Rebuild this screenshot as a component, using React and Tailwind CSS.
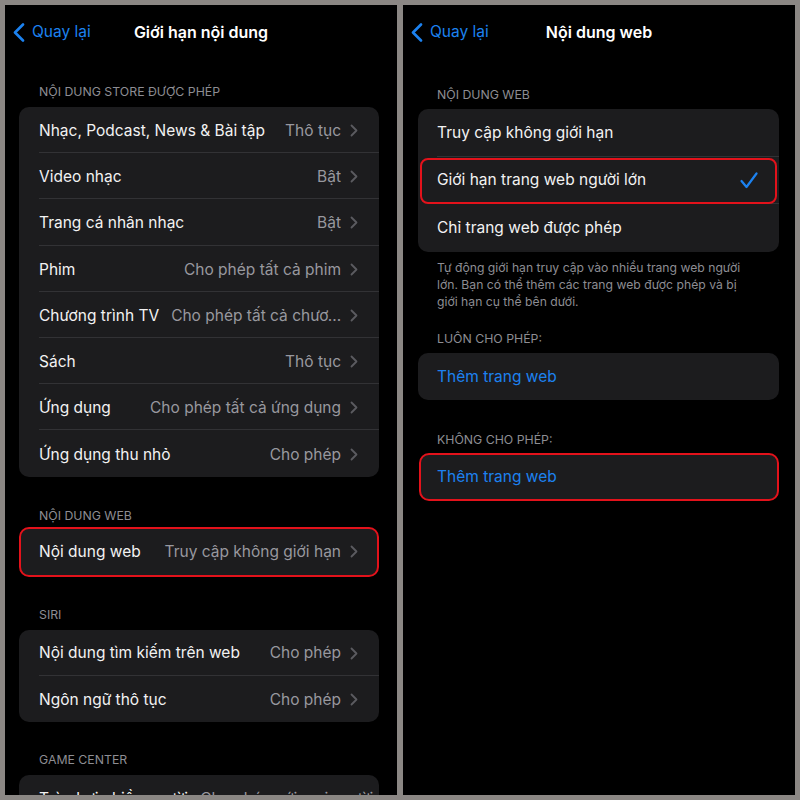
import React from 'react';

const font = { fontFamily: 'Inter, "Noto Sans", sans-serif' };

const Chevron = () => (
  <svg width="8" height="13" viewBox="0 0 8 13" className="shrink-0 ml-[9px]">
    <path d="M1.5 1.5 L6.5 6.5 L1.5 11.5" fill="none" stroke="#5b5b60" strokeWidth="1.8" strokeLinecap="round" strokeLinejoin="round" />
  </svg>
);

const BackChevron = () => (
  <svg width="12" height="19" viewBox="0 0 12 19">
    <path d="M10 1.5 L2 9.5 L10 17.5" fill="none" stroke="#1c82f0" strokeWidth="2.6" strokeLinecap="round" strokeLinejoin="round" />
  </svg>
);

const NavBar = ({ title }) => (
  <div className="h-[54px] grid grid-cols-[1fr_auto_1fr] items-center">
    <div className="flex items-center pl-[8px] gap-[7px]">
      <BackChevron />
      <span className="text-[15.5px] text-[#1c82f0]">Quay lại</span>
    </div>
    <div className="text-[16px] font-semibold text-white">{title}</div>
    <div />
  </div>
);

const Header = ({ children, className }) => (
  <div className={`text-[12.3px] leading-[16px] text-[#8d8d93] uppercase ${className}`}>{children}</div>
);

const Row = ({ label, value, last }) => (
  <div className="flex items-center h-[46.2px] pl-[20px]">
    <div className={`flex-1 flex items-center h-full pr-[21px] pt-[2px] ${last ? '' : 'border-b border-[#323235]'}`}>
      <span className="text-[15.5px] text-[#f2f2f2] whitespace-nowrap">{label}</span>
      <span className="flex-1 text-right text-[15.5px] text-[#98989e] whitespace-nowrap overflow-hidden ml-3">{value}</span>
      <Chevron />
    </div>
  </div>
);

const leftRows = [
  ['Nhạc, Podcast, News & Bài tập', 'Thô tục'],
  ['Video nhạc', 'Bật'],
  ['Trang cá nhân nhạc', 'Bật'],
  ['Phim', 'Cho phép tất cả phim'],
  ['Chương trình TV', 'Cho phép tất cả chươ...'],
  ['Sách', 'Thô tục'],
  ['Ứng dụng', 'Cho phép tất cả ứng dụng'],
  ['Ứng dụng thu nhỏ', 'Cho phép'],
];

const LeftPanel = () => (
  <div className="w-[392px] h-[790px] bg-black overflow-hidden">
    <NavBar title="Giới hạn nội dung" />
    <Header className="pl-[34px] pt-[25px] pb-[7px]">Nội dung Store được phép</Header>
    <div className="ml-[14px] mr-[18px] rounded-[10px] bg-[#1c1c1e] overflow-hidden">
      {leftRows.map(([l, v], i) => (
        <Row key={l} label={l} value={v} last={i === leftRows.length - 1} />
      ))}
    </div>
    <Header className="pl-[34px] pt-[31px] pb-[3px]">Nội dung web</Header>
    <div className="ml-[14px] mr-[18px] rounded-[10px] bg-[#1c1c1e] border-2 border-[#e3121b] overflow-hidden">
      <div className="flex items-center h-[46px] pl-[18px] pr-[19px]">
        <span className="text-[15.5px] text-[#f2f2f2] whitespace-nowrap">Nội dung web</span>
        <span className="flex-1 text-right text-[15.5px] text-[#98989e] whitespace-nowrap">Truy cập không giới hạn</span>
        <Chevron />
      </div>
    </div>
    <Header className="pl-[34px] pt-[30px] pb-[7px]">Siri</Header>
    <div className="ml-[14px] mr-[18px] rounded-[10px] bg-[#1c1c1e] overflow-hidden">
      <Row label="Nội dung tìm kiếm trên web" value="Cho phép" />
      <Row label="Ngôn ngữ thô tục" value="Cho phép" last />
    </div>
    <Header className="pl-[34px] pt-[30px] pb-[7px]">Game Center</Header>
    <div className="ml-[14px] mr-[18px] rounded-[10px] bg-[#1c1c1e] overflow-hidden">
      <Row label="Trò chơi nhiều người" value="Cho phép với mọi người" />
    </div>
  </div>
);

const Check = () => (
  <svg width="18" height="17" viewBox="0 0 18 17" className="shrink-0">
    <path d="M1.5 9 L6.5 15 L16.5 1.5" fill="none" stroke="#1c82f0" strokeWidth="2.2" strokeLinecap="round" strokeLinejoin="round" />
  </svg>
);

const RightPanel = () => (
  <div className="w-[392px] h-[790px] bg-black overflow-hidden">
    <NavBar title="Nội dung web" />
    <Header className="pl-[34px] pt-[28px] pb-[6px]">Nội dung web</Header>
    <div className="ml-[15px] mr-[16px] rounded-[10px] bg-[#1c1c1e] overflow-hidden">
      <div className="flex items-center h-[48px] pl-[19px]">
        <div className="flex-1 h-full flex items-center border-b border-[#323235]">
          <span className="text-[15.5px] text-[#f2f2f2]">Truy cập không giới hạn</span>
        </div>
      </div>
      <div className="relative flex items-center h-[47px] pl-[19px]">
        <div className="flex-1 h-full flex items-center border-b border-[#323235] pr-[21px]">
          <span className="flex-1 text-[15.5px] text-[#f2f2f2]">Giới hạn trang web người lớn</span>
          <Check />
        </div>
        <div className="absolute left-[2px] right-[2px] top-[1px] bottom-0 rounded-[8px] border-2 border-[#e3121b]" />
      </div>
      <div className="flex items-center h-[48px] pl-[19px]">
        <span className="text-[15.5px] text-[#f2f2f2]">Chỉ trang web được phép</span>
      </div>
    </div>
    <div className="ml-[34px] w-[312px] pt-[7px] text-[12.2px] leading-[17px] text-[#8d8d93]">
      Tự động giới hạn truy cập vào nhiều trang web người lớn. Bạn có thể thêm các trang web được phép và bị giới hạn cụ thể bên dưới.
    </div>
    <Header className="pl-[34px] pt-[21px] pb-[6px]">Luôn cho phép:</Header>
    <div className="ml-[15px] mr-[16px] rounded-[10px] bg-[#1c1c1e] h-[47px] flex items-center pl-[19px]">
      <span className="text-[15.5px] text-[#1c82f0]">Thêm trang web</span>
    </div>
    <Header className="pl-[34px] pt-[32px] pb-[5px]">Không cho phép:</Header>
    <div className="ml-[16px] mr-[16px] rounded-[10px] bg-[#1c1c1e] border-2 border-[#e3121b] h-[48px] flex items-center pl-[16px]">
      <span className="text-[15.5px] text-[#1c82f0]">Thêm trang web</span>
    </div>
  </div>
);

export default function App() {
  return (
    <div className="w-[800px] h-[800px] bg-[#8b8784] p-[5px] flex gap-[6px]" style={font}>
      <LeftPanel />
      <RightPanel />
    </div>
  );
}
